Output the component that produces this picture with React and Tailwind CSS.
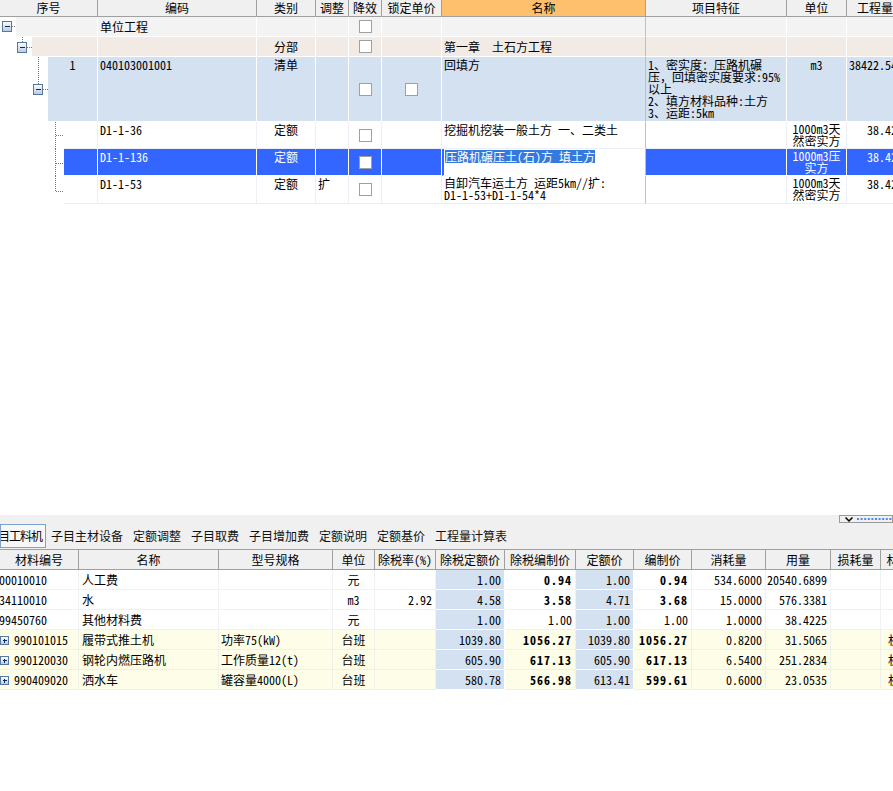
import React from "react";

const FONT = "font-['Noto_Sans_Mono_CJK_SC','Noto_Sans_CJK_SC',monospace]";

const TW = [
  "w-[98px]",
  "w-[159px]",
  "w-[59px]",
  "w-[33px]",
  "w-[33px]",
  "w-[60px]",
  "w-[204px]",
  "w-[141px]",
  "w-[60px]",
  "w-[76px]",
];

const BW = [
  "w-[79px]",
  "w-[140px]",
  "w-[114px]",
  "w-[42px]",
  "w-[61px]",
  "w-[69px]",
  "w-[71px]",
  "w-[58px]",
  "w-[58px]",
  "w-[74px]",
  "w-[65px]",
  "w-[50px]",
  "w-[60px]",
];

function Defs() {
  return (
    <defs>
      <linearGradient id="treeGrad" x1="0" y1="0" x2="0" y2="1">
        <stop offset="0" stopColor="#ffffff" />
        <stop offset="1" stopColor="#b6c8e0" />
      </linearGradient>
    </defs>
  );
}

function Icon({ x, y, plus = false, w = 9, h = 10 }) {
  const cy = y + Math.floor(h / 2) + 0.5;
  const cx = x + Math.floor(w / 2) + 0.5;
  return (
    <g shapeRendering="crispEdges">
      <rect x={x + 0.5} y={y + 0.5} width={w} height={h} fill="url(#treeGrad)" stroke="#5877a0" />
      <line x1={x + 3} x2={x + w - 1} y1={cy} y2={cy} stroke="#0f2a55" />
      {plus && <line x1={cx} x2={cx} y1={y + 3} y2={y + h - 1} stroke="#0f2a55" />}
    </g>
  );
}

const Dot = (p) => (
  <line {...p} stroke="#777777" strokeDasharray="1 1" shapeRendering="crispEdges" />
);

function Cell({ i, cls = "", children }) {
  return <div className={`${TW[i]} shrink-0 h-full overflow-hidden whitespace-nowrap ${cls}`}>{children}</div>;
}

function Check() {
  return <div className="w-[13px] h-[13px] bg-white border border-[#a0a0a0]" />;
}

const G = "bg-[#f3f3f3] border-r border-b border-white";
const BE = "bg-[#f2ebe5] border-r border-b border-white";
const LB = "bg-[#d3e1f1] border-r border-b border-white";
const W = "bg-white border-r border-b border-[#eceff5]";
const SEL = "bg-[#3366ff] border-r border-b border-white text-white";
const NAMECOL = "border-r-[#a9c3e6]";

function TopHeader() {
  const heads = ["序号", "编码", "类别", "调整", "降效", "锁定单价", "名称", "项目特征", "单位"];
  return (
    <div className="flex h-[17px] bg-[#f0f0f0] border-b border-[#a0a0a0]">
      {heads.map((h, i) => (
        <div
          key={i}
          className={`${TW[i]} shrink-0 h-full flex items-center justify-center overflow-hidden whitespace-nowrap border-r border-[#a0a0a0] leading-none ${
            i === 6 ? "bg-[#ffc06e]" : ""
          }`}
        >
          {h}
        </div>
      ))}
      <div className="w-[76px] shrink-0 h-full flex items-center pl-[10px] overflow-hidden whitespace-nowrap border-r border-[#a0a0a0] leading-none">
        工程量
      </div>
    </div>
  );
}

function TopTable() {
  return (
    <div className="w-[922px] leading-[14px]">
      <TopHeader />
      {/* Row 1 */}
      <div className="flex h-[20px]">
        <div className="w-[98px] shrink-0 flex h-full">
          <svg width="16" height="20" className="shrink-0">
            <Defs />
            <Icon x={2} y={4} />
            <Dot x1={12} x2={16} y1={9.5} y2={9.5} />
          </svg>
          <div className={`flex-1 h-full ${G}`} />
        </div>
        <Cell i={1} cls={`${G} flex items-center pl-[2px]`}>单位工程</Cell>
        <Cell i={2} cls={G} />
        <Cell i={3} cls={G} />
        <Cell i={4} cls={`${G} flex items-center justify-center`}>
          <Check />
        </Cell>
        <Cell i={5} cls={G} />
        <Cell i={6} cls={`${G} ${NAMECOL}`} />
        <Cell i={7} cls={G} />
        <Cell i={8} cls={G} />
        <Cell i={9} cls={G} />
      </div>
      {/* Row 2 */}
      <div className="flex h-[20px]">
        <div className="w-[98px] shrink-0 flex h-full">
          <svg width="32" height="20" className="shrink-0">
            <Defs />
            <Dot x1={22.5} x2={22.5} y1={0} y2={5} />
            <Icon x={17} y={5} />
            <Dot x1={27} x2={32} y1={10.5} y2={10.5} />
          </svg>
          <div className={`flex-1 h-full ${BE}`} />
        </div>
        <Cell i={1} cls={BE} />
        <Cell i={2} cls={`${BE} flex items-center justify-center`}>分部</Cell>
        <Cell i={3} cls={BE} />
        <Cell i={4} cls={`${BE} flex items-center justify-center`}>
          <Check />
        </Cell>
        <Cell i={5} cls={BE} />
        <Cell i={6} cls={`${BE} ${NAMECOL} flex items-center pl-[2px]`}>第一章　土石方工程</Cell>
        <Cell i={7} cls={BE} />
        <Cell i={8} cls={BE} />
        <Cell i={9} cls={BE} />
      </div>
      {/* Row 3 */}
      <div className="flex h-[65px]">
        <div className="w-[98px] shrink-0 flex h-full">
          <svg width="48" height="65" className="shrink-0">
            <Defs />
            <Dot x1={38.5} x2={38.5} y1={0} y2={27} />
            <Icon x={33} y={27} />
            <Dot x1={43} x2={48} y1={32.5} y2={32.5} />
          </svg>
          <div className={`flex-1 h-full ${LB} text-center pt-[1px]`}>1</div>
        </div>
        <Cell i={1} cls={`${LB} pl-[2px] pt-[1px]`}>040103001001</Cell>
        <Cell i={2} cls={`${LB} text-center pt-[1px]`}>清单</Cell>
        <Cell i={3} cls={LB} />
        <Cell i={4} cls={`${LB} flex items-center justify-center`}>
          <Check />
        </Cell>
        <Cell i={5} cls={`${LB} flex items-center justify-center`}>
          <Check />
        </Cell>
        <Cell i={6} cls={`${LB} ${NAMECOL} pl-[2px] pt-[1px]`}>回填方</Cell>
        <Cell i={7} cls={`${LB} pl-[2px] pt-[2px] leading-[12px]`}>
          1、密实度：压路机碾
          <br />
          压，回填密实度要求:95%
          <br />
          以上
          <br />
          2、填方材料品种:土方
          <br />
          3、运距:5km
        </Cell>
        <Cell i={8} cls={`${LB} text-center pt-[1px]`}>m3</Cell>
        <Cell i={9} cls={`${LB} pl-[2px] pt-[1px]`}>38422.54</Cell>
      </div>
      {/* Row 4 */}
      <div className="flex h-[27px]">
        <div className="w-[98px] shrink-0 flex h-full">
          <svg width="64" height="27" className="shrink-0">
            <Dot x1={55.5} x2={55.5} y1={0} y2={27} />
            <Dot x1={56} x2={64} y1={13.5} y2={13.5} />
          </svg>
          <div className={`flex-1 h-full ${W}`} />
        </div>
        <Cell i={1} cls={`${W} pl-[2px] pt-[1px]`}>D1-1-36</Cell>
        <Cell i={2} cls={`${W} text-center pt-[1px]`}>定额</Cell>
        <Cell i={3} cls={W} />
        <Cell i={4} cls={`${W} flex items-center justify-center`}>
          <Check />
        </Cell>
        <Cell i={5} cls={W} />
        <Cell i={6} cls={`${W} ${NAMECOL} pl-[2px] pt-[1px]`}>挖掘机挖装一般土方 一、二类土</Cell>
        <Cell i={7} cls={W} />
        <Cell i={8} cls={`${W} text-center pt-[1px] leading-[12px]`}>
          1000m3天
          <br />
          然密实方
        </Cell>
        <Cell i={9} cls={`${W} pl-[20px] pt-[1px]`}>38.4225</Cell>
      </div>
      {/* Row 5 (selected) */}
      <div className="flex h-[27px]">
        <div className="w-[98px] shrink-0 flex h-full">
          <svg width="64" height="27" className="shrink-0">
            <Dot x1={55.5} x2={55.5} y1={0} y2={27} />
            <Dot x1={56} x2={64} y1={14.5} y2={14.5} />
          </svg>
          <div className={`flex-1 h-full ${SEL}`} />
        </div>
        <Cell i={1} cls={`${SEL} pl-[2px] pt-[1px]`}>D1-1-136</Cell>
        <Cell i={2} cls={`${SEL} text-center pt-[1px]`}>定额</Cell>
        <Cell i={3} cls={SEL} />
        <Cell i={4} cls={`${SEL} flex items-center justify-center`}>
          <Check />
        </Cell>
        <Cell i={5} cls={SEL} />
        <Cell i={6} cls={`bg-white border-l-2 border-l-[#3366ff] border-r border-r-[#a9c3e6] border-b border-b-white pl-[1px] pt-[1px]`}>
          <span className="bg-[#3379e0] text-white leading-[13px] inline-block">压路机碾压土(石)方 填土方</span>
        </Cell>
        <Cell i={7} cls={SEL} />
        <Cell i={8} cls={`${SEL} text-center pt-[1px] leading-[12px]`}>
          1000m3压
          <br />
          实方
        </Cell>
        <Cell i={9} cls={`${SEL} pl-[20px] pt-[1px]`}>38.4225</Cell>
      </div>
      {/* Row 6 */}
      <div className="flex h-[28px]">
        <div className="w-[98px] shrink-0 flex h-full">
          <svg width="64" height="28" className="shrink-0">
            <Dot x1={55.5} x2={55.5} y1={0} y2={15.5} />
            <Dot x1={56} x2={64} y1={15.5} y2={15.5} />
          </svg>
          <div className={`flex-1 h-full ${W}`} />
        </div>
        <Cell i={1} cls={`${W} pl-[2px] pt-[1px]`}>D1-1-53</Cell>
        <Cell i={2} cls={`${W} text-center pt-[1px]`}>定额</Cell>
        <Cell i={3} cls={`${W} pl-[2px] pt-[1px]`}>扩</Cell>
        <Cell i={4} cls={`${W} flex items-center justify-center`}>
          <Check />
        </Cell>
        <Cell i={5} cls={W} />
        <Cell i={6} cls={`${W} ${NAMECOL} pl-[2px] pt-[1px] leading-[12px]`}>
          自卸汽车运土方 运距5km//扩:
          <br />
          D1-1-53+D1-1-54*4
        </Cell>
        <Cell i={7} cls={W} />
        <Cell i={8} cls={`${W} text-center pt-[1px] leading-[12px]`}>
          1000m3天
          <br />
          然密实方
        </Cell>
        <Cell i={9} cls={`${W} pl-[20px] pt-[1px]`}>38.4225</Cell>
      </div>
    </div>
  );
}

const TABS = ["子目主材设备", "定额调整", "子目取费", "子目增加费", "定额说明", "定额基价", "工程量计算表"];

function TabBar() {
  return (
    <div className="h-[34px] bg-[#f0f0f0] flex flex-col">
      <div className="h-[8px] flex justify-end">
        <div className="w-[54px] h-[8px] border border-[#9a9a9a] flex items-center pl-[5px] gap-[4px]">
          <svg width="8" height="5" className="shrink-0">
            <path d="M0.5 0.5 L4 4 L7.5 0.5" stroke="#000" fill="none" strokeWidth="1.5" />
          </svg>
          <svg width="40" height="2" className="shrink-0">
            <line x1="0" x2="40" y1="1" y2="1" stroke="#4a8ae0" strokeWidth="2" strokeDasharray="2 1.6" />
          </svg>
        </div>
      </div>
      <div className="h-[24px] mt-[1px] flex items-center">
        <div className="w-[46px] h-[24px] shrink-0 border border-[#7aa2cf] bg-[#f7f7f7] flex items-center justify-end pr-[3px] overflow-hidden whitespace-nowrap tracking-[-1px]">
          目工料机
        </div>
        {TABS.map((t) => (
          <div key={t} className="px-[5px] whitespace-nowrap text-[#111]">
            {t}
          </div>
        ))}
      </div>
    </div>
  );
}

const BHEAD = ["材料编号", "名称", "型号规格", "单位", "除税率(%)", "除税定额价", "除税编制价", "定额价", "编制价", "消耗量", "用量", "损耗量", "材料类别"];

const ROWS = [
  { v: ["00010010", "人工费", "", "元", "", "1.00", "0.94", "1.00", "0.94", "534.6000", "20540.6899", "", ""], bold: true },
  { v: ["34110010", "水", "", "m3", "2.92", "4.58", "3.58", "4.71", "3.68", "15.0000", "576.3381", "", ""], bold: true },
  { v: ["99450760", "其他材料费", "", "元", "", "1.00", "1.00", "1.00", "1.00", "1.0000", "38.4225", "", ""], bold: false },
  { v: ["990101015", "履带式推土机", "功率75(kW)", "台班", "", "1039.80", "1056.27", "1039.80", "1056.27", "0.8200", "31.5065", "", "机械"], bold: true, yellow: true },
  { v: ["990120030", "钢轮内燃压路机", "工作质量12(t)", "台班", "", "605.90", "617.13", "605.90", "617.13", "6.5400", "251.2834", "", "机械"], bold: true, yellow: true },
  { v: ["990409020", "洒水车", "罐容量4000(L)", "台班", "", "580.78", "566.98", "613.41", "599.61", "0.6000", "23.0535", "", "机械"], bold: true, yellow: true },
];

const ALIGN = [
  "justify-start",
  "justify-start pl-[3px]",
  "justify-start pl-[2px]",
  "justify-center",
  "justify-end pr-[3px]",
  "justify-end pr-[3px]",
  "justify-end pr-[3px]",
  "justify-end pr-[3px]",
  "justify-end pr-[3px]",
  "justify-end pr-[3px]",
  "justify-end pr-[3px]",
  "justify-start",
  "justify-start pl-[7px]",
];

function BottomTable() {
  return (
    <div className="w-[941px]">
      <div className="flex h-[21px] bg-[#f0f0f0] border-t border-b border-[#a0a0a0]">
        {BHEAD.map((h, i) => (
          <div
            key={i}
            className={`${BW[i]} shrink-0 h-full flex items-center justify-center overflow-hidden whitespace-nowrap border-r border-[#a0a0a0]`}
          >
            {h}
          </div>
        ))}
      </div>
      {ROWS.map((r, ri) => (
        <div key={ri} className="flex h-[20px]">
          {r.v.map((val, i) => {
            const blue = i === 5 || i === 7;
            const bg = blue ? "bg-[#d3e1f1] border-white" : r.yellow ? "bg-[#fefde7] border-[#eef0ea]" : "bg-white border-[#eef1f6]";
            const isBold = r.bold && (i === 6 || i === 8);
            return (
              <div
                key={i}
                className={`${BW[i]} shrink-0 h-full flex items-center overflow-hidden whitespace-nowrap border-r border-b ${bg} ${ALIGN[i]} ${
                  isBold ? "font-bold tracking-[1px]" : ""
                }`}
              >
                {i === 0 && r.yellow ? (
                  <>
                    <svg width="9" height="9" className="shrink-0 mt-[1px]">
                      <Defs />
                      <Icon x={0} y={0} w={8} h={8} plus />
                    </svg>
                    <span className="ml-[5px]">{val}</span>
                  </>
                ) : i === 0 ? (
                  <span className="-ml-[1px]">{val}</span>
                ) : (
                  val
                )}
              </div>
            );
          })}
        </div>
      ))}
    </div>
  );
}

export default function App() {
  return (
    <div className={`w-[893px] h-[791px] overflow-hidden bg-white text-[12px] text-black ${FONT}`}>
      <div className="h-[515px] overflow-hidden">
        <TopTable />
      </div>
      <TabBar />
      <BottomTable />
    </div>
  );
}
